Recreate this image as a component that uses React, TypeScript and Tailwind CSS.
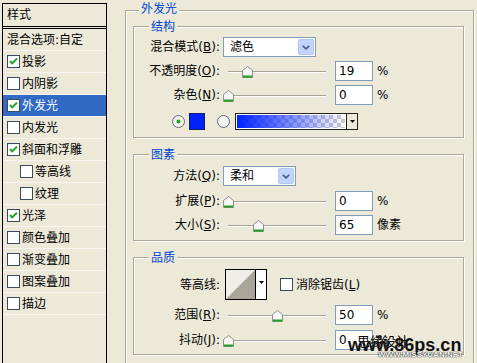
import React from "react";

function Check({ checked }: { checked: boolean }) {
  return (
    <svg width="13" height="13" viewBox="0 0 13 13" className="shrink-0">
      <rect x="0.5" y="0.5" width="12" height="12" fill="#fff" stroke="#3C4A5C" />
      {checked && (
        <path d="M3 6 L5.2 8.4 L10 3.6" fill="none" stroke="#21A121" strokeWidth="2" />
      )}
    </svg>
  );
}

function Radio({ checked }: { checked: boolean }) {
  return (
    <svg width="13" height="13" viewBox="0 0 13 13" className="shrink-0">
      <circle cx="6.5" cy="6.5" r="6" fill="#F4F4F0" stroke="#5F6B7C" />
      {checked && <circle cx="6.5" cy="6.5" r="2" fill="#21A121" />}
    </svg>
  );
}

function Thumb() {
  return (
    <svg width="11" height="12" viewBox="0 0 11 12">
      <path d="M0.5 4.5 L5.5 0.5 L10.5 4.5 V11.5 H0.5 Z" fill="#F7F7F3" stroke="#8E8F8F" />
      <path d="M1 10.5 H10" stroke="#21A121" strokeWidth="2" />
    </svg>
  );
}

function Slider({ pos }: { pos: number }) {
  return (
    <div className="relative w-[106px] h-[20px]">
      <div className="absolute left-[5px] w-[98px] top-[10px] h-[2px] border-t border-[#A3A39A] border-b border-b-white" />
      <div className="absolute top-[5px]" style={{ left: `${Math.round(pos * 0.98)}px` }}>
        <Thumb />
      </div>
    </div>
  );
}

function Num({ v, unit }: { v: string; unit: string }) {
  return (
    <div className="flex items-center ml-[6px]">
      <div className="w-[38px] h-[20px] border border-[#7F9DB9] bg-white flex items-center pl-[3px]">{v}</div>
      <span className="ml-[4px]">{unit}</span>
    </div>
  );
}

function Select({ w, text }: { w: string; text: string }) {
  return (
    <div className={`${w} h-[20px] border border-[#7F9DB9] bg-white flex items-center`}>
      <span className="pl-[6px] flex-1">{text}</span>
      <div className="w-[16px] h-[16px] mr-[1px] bg-[#C3D3FD] border border-[#B1C6F5] rounded-[2px] flex items-center justify-center">
        <svg width="8" height="5" viewBox="0 0 8 5">
          <path d="M0.8 0.8 L4 3.8 L7.2 0.8" fill="none" stroke="#4D6185" strokeWidth="1.8" />
        </svg>
      </div>
    </div>
  );
}

function Label({ children }: { children: React.ReactNode }) {
  return <div className="w-[86px] text-right shrink-0">{children}</div>;
}

function Row({ label, children, cls = "" }: { label: React.ReactNode; children: React.ReactNode; cls?: string }) {
  return (
    <div className={`flex items-center h-[20px] ${cls}`}>
      <Label>{label}</Label>
      <div className="ml-[3px] flex items-center">{children}</div>
    </div>
  );
}

function Group({ title, cls, children, titleCls = "-top-[7px] left-[15px]" }: { title: string; cls: string; children: React.ReactNode; titleCls?: string }) {
  return (
    <div className={`relative border border-[#ACA899] shadow-[inset_1px_1px_0_#fff,1px_1px_0_#fff] ${cls}`}>
      <span className={`absolute ${titleCls} px-[2px] bg-[#ECE9D8] text-[#0046D5] leading-[14px]`}>{title}</span>
      {children}
    </div>
  );
}

const items: { t: string; c: boolean; indent?: boolean; sel?: boolean; nobox?: boolean }[] = [
  { t: "混合选项:自定", c: false, nobox: true },
  { t: "投影", c: true },
  { t: "内阴影", c: false },
  { t: "外发光", c: true, sel: true },
  { t: "内发光", c: false },
  { t: "斜面和浮雕", c: true },
  { t: "等高线", c: false, indent: true },
  { t: "纹理", c: false, indent: true },
  { t: "光泽", c: true },
  { t: "颜色叠加", c: false },
  { t: "渐变叠加", c: false },
  { t: "图案叠加", c: false },
  { t: "描边", c: false },
];

export default function App() {
  return (
    <div className="w-[477px] h-[363px] bg-[#ECE9D8] flex overflow-hidden relative text-[12px] leading-none text-black font-['DejaVu_Sans','Noto_Sans_CJK_SC',sans-serif]">
      {/* left list */}
      <div className="ml-[2px] mt-[3px] w-[105px] h-[380px] shrink-0 border border-black flex flex-col">
        <div className="h-[25px] border-b-[3px] border-double border-black flex items-center pl-[4px]">样式</div>
        {items.map((it) => (
          <div
            key={it.t}
            className={`h-[22px] border-b border-[#F7F6F0] flex items-center ${it.sel ? "bg-[#316AC5] text-white" : ""} ${it.indent ? "pl-[17px]" : "pl-[4px]"}`}
          >
            {!it.nobox && <Check checked={it.c} />}
            <span className={it.nobox ? "" : "ml-[2px]"}>{it.t}</span>
          </div>
        ))}
      </div>

      {/* right */}
      <Group title="外发光" titleCls="-top-[9px] left-[13px]" cls="ml-[18px] mt-[10px] w-[349px] h-[400px] pt-[15px] pl-[7px]">
        <Group title="结构" cls="w-[331px] pt-[10px] pb-[7px]">
          <Row label={<>混合模式(<span className="underline">B</span>):</>}>
            <Select w="w-[93px]" text="滤色" />
          </Row>
          <Row cls="mt-[4px]" label={<>不透明度(<span className="underline">O</span>):</>}>
            <Slider pos={19} />
            <Num v="19" unit="%" />
          </Row>
          <Row cls="mt-[4px]" label={<>杂色(<span className="underline">N</span>):</>}>
            <Slider pos={0} />
            <Num v="0" unit="%" />
          </Row>
          <div className="mt-[8px] h-[17px] flex items-center pl-[38px]">
            <Radio checked />
            <div className="ml-[4px] w-[16px] h-[17px] bg-[#0022FF] border border-[#1a1a6a]" />
            <div className="ml-[12px]">
              <Radio checked={false} />
            </div>
            <div className="ml-[5px] w-[123px] h-[17px] border border-[#222] flex">
              <div className="flex-1 border border-white relative bg-[repeating-conic-gradient(#CDCDCD_0_25%,#ffffff_0_50%)] bg-[length:8px_8px]">
                <div className="absolute inset-0 bg-gradient-to-r from-[#0022FF] to-[rgba(0,34,255,0)]" />
              </div>
              <div className="w-[11px] border-l border-[#222] bg-[#ECE9D8] flex items-center justify-center">
                <svg width="5" height="3" viewBox="0 0 5 3">
                  <path d="M0 0 H5 L2.5 3 Z" fill="#000" />
                </svg>
              </div>
            </div>
          </div>
        </Group>

        <Group title="图素" cls="mt-[16px] w-[331px] pt-[11px] pb-[5px]">
          <Row label={<>方法(<span className="underline">Q</span>):</>}>
            <Select w="w-[73px]" text="柔和" />
          </Row>
          <Row cls="mt-[5px]" label={<>扩展(<span className="underline">P</span>):</>}>
            <Slider pos={0} />
            <Num v="0" unit="%" />
          </Row>
          <Row cls="mt-[4px]" label={<>大小(<span className="underline">S</span>):</>}>
            <Slider pos={31} />
            <Num v="65" unit="像素" />
          </Row>
        </Group>

        <Group title="品质" cls="mt-[16px] w-[331px] pt-[11px] pb-[4px]">
          <div className="flex items-center h-[31px]">
            <Label>等高线:</Label>
            <div className="ml-[5px] w-[42px] h-[31px] border border-black flex bg-white">
              <svg width="29" height="29" viewBox="0 0 29 29" className="shrink-0">
                <rect width="29" height="29" fill="#EFEEE8" />
                <path d="M0 29 L29 0 V29 Z" fill="#A8A698" />
              </svg>
              <div className="flex-1 border-l border-black bg-white flex justify-center pt-[11px]">
                <svg width="5" height="3" viewBox="0 0 5 3">
                  <path d="M0 0 H5 L2.5 3 Z" fill="#000" />
                </svg>
              </div>
            </div>
            <div className="ml-[13px] flex items-center">
              <Check checked={false} />
              <span className="ml-[3px]">消除锯齿(<span className="underline">L</span>)</span>
            </div>
          </div>
          <Row cls="mt-[5px]" label={<>范围(<span className="underline">R</span>):</>}>
            <Slider pos={50} />
            <Num v="50" unit="%" />
          </Row>
          <Row cls="mt-[5px]" label={<>抖动(<span className="underline">J</span>):</>}>
            <Slider pos={0} />
            <Num v="0" unit="%" />
          </Row>
        </Group>
      </Group>

      {/* watermark */}
      <div className="absolute left-[357px] top-[334px] text-[13px] text-black font-['Noto_Sans_CJK_SC',sans-serif]">思缘设计</div>
      <div className="absolute left-[348px] top-[336px] text-[18px] font-bold text-[#111] font-['Liberation_Sans',sans-serif] leading-none">www.86ps.cn</div>
      <div className="absolute left-[378px] top-[351px] text-[8px] font-bold text-white font-['Liberation_Sans',sans-serif] leading-none [text-shadow:0_0_1px_#000,0_0_1px_#000]">WWW.MISSYUAN.NET</div>
    </div>
  );
}
